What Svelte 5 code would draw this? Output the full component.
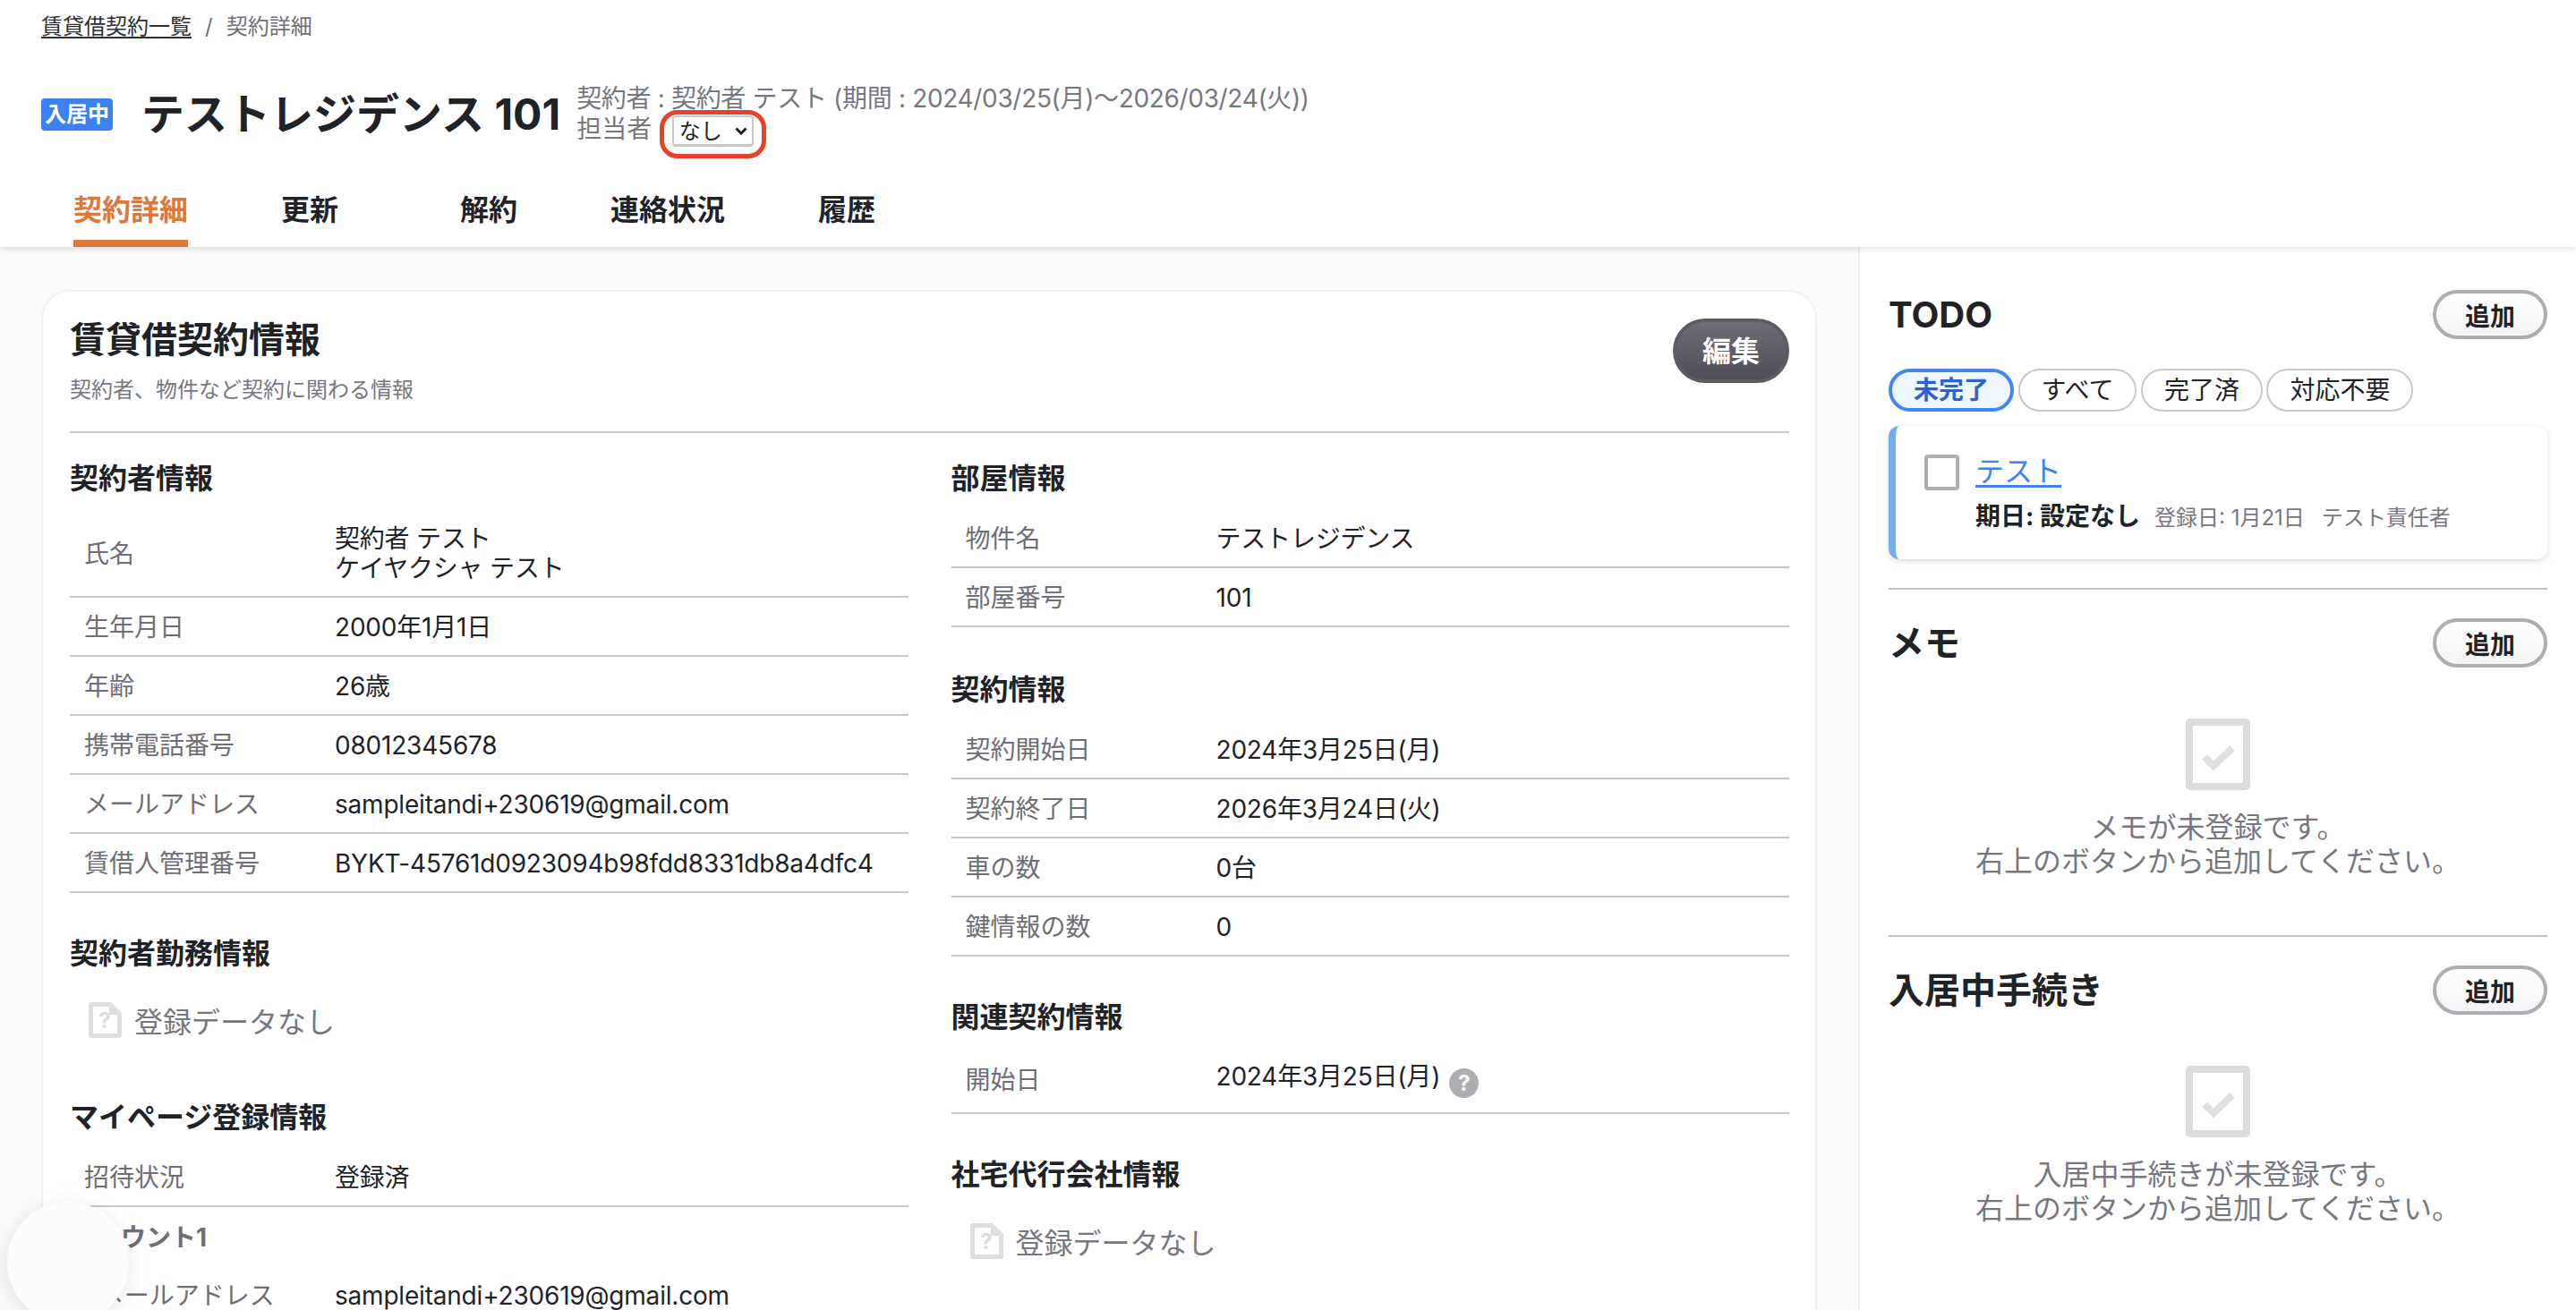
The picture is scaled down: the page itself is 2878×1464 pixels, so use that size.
<script>
  const tabs = ['契約詳細', '更新', '解約', '連絡状況', '履歴'];

  const tenantRows = [
    { label: '氏名', value: ['契約者 テスト', 'ケイヤクシャ テスト'] },
    { label: '生年月日', value: ['2000年1月1日'] },
    { label: '年齢', value: ['26歳'] },
    { label: '携帯電話番号', value: ['08012345678'] },
    { label: 'メールアドレス', value: ['sampleitandi+230619@gmail.com'] },
    { label: '賃借人管理番号', value: ['BYKT-45761d0923094b98fdd8331db8a4dfc4'] }
  ];
  const roomRows = [
    { label: '物件名', value: ['テストレジデンス'] },
    { label: '部屋番号', value: ['101'] }
  ];
  const contractRows = [
    { label: '契約開始日', value: ['2024年3月25日(月)'] },
    { label: '契約終了日', value: ['2026年3月24日(火)'] },
    { label: '車の数', value: ['0台'] },
    { label: '鍵情報の数', value: ['0'] }
  ];
  const filters = ['未完了', 'すべて', '完了済', '対応不要'];
</script>

{#snippet rows(list)}
  <div class="table">
    {#each list as row}
      <div class="row">
        <div class="label">{row.label}</div>
        <div class="value">
          {#each row.value as line}
            <div>{line}</div>
          {/each}
        </div>
      </div>
    {/each}
  </div>
{/snippet}

{#snippet noData()}
  <div class="no-data">
    <svg width="37" height="40" viewBox="0 0 37 40">
      <path d="M3 0H25L37 12V37a3 3 0 0 1-3 3H3a3 3 0 0 1-3-3V3a3 3 0 0 1 3-3Z" fill="#dedee0" />
      <path d="M5 5H23V14H32V35H5Z" fill="#fff" />
      <text x="18" y="29" text-anchor="middle" class="doc-mark">?</text>
    </svg>
    <span>登録データなし</span>
  </div>
{/snippet}

{#snippet emptyState(first)}
  <div class="empty">
    <svg width="72" height="80" viewBox="0 0 72 80">
      <rect x="4" y="4" width="64" height="72" rx="1" fill="#fff" stroke="#dcdcde" stroke-width="8" />
      <path d="M21 43L31 53L52 33" fill="none" stroke="#e0e0e2" stroke-width="8" />
    </svg>
    <p>{first}<br />右上のボタンから追加してください。</p>
  </div>
{/snippet}

<div class="page">
  <header class="header">
    <nav class="breadcrumb">
      <span class="crumb-link">賃貸借契約一覧</span>
      <span class="crumb-sep">/</span>
      <span>契約詳細</span>
    </nav>
    <div class="title-row">
      <span class="badge">入居中</span>
      <h1>テストレジデンス 101</h1>
      <div class="meta">
        <div class="meta-line">契約者 : 契約者 テスト (期間 : 2024/03/25(月)〜2026/03/24(火))</div>
        <div class="meta-owner">
          <span class="owner-label">担当者</span>
          <div class="owner-select">
            <span class="owner-text">なし</span>
            <svg width="14" height="10" viewBox="0 0 14 10">
              <path d="M1.5 2.5L7 8L12.5 2.5" fill="none" stroke="#1f2328" stroke-width="3" />
            </svg>
            <span class="ring"></span>
          </div>
        </div>
      </div>
    </div>
    <div class="tabs">
      {#each tabs as tab, i}
        <div class="tab">
          <span class:active={i === 0}>{tab}</span>
        </div>
      {/each}
    </div>
  </header>

  <main class="main">
    <section class="content">
      <div class="card">
        <div class="card-head">
          <div>
            <h2>賃貸借契約情報</h2>
            <p class="card-sub">契約者、物件など契約に関わる情報</p>
          </div>
          <button type="button" class="edit">編集</button>
        </div>
        <div class="columns">
          <div>
            <h3>契約者情報</h3>
            {@render rows(tenantRows)}
            <h3 class="next">契約者勤務情報</h3>
            {@render noData()}
            <h3 class="next">マイページ登録情報</h3>
            {@render rows([{ label: '招待状況', value: ['登録済'] }])}
            <div class="account">アカウント1</div>
            <div class="row plain">
              <div class="label">Eメールアドレス</div>
              <div class="value">sampleitandi+230619@gmail.com</div>
            </div>
          </div>
          <div>
            <h3>部屋情報</h3>
            {@render rows(roomRows)}
            <h3 class="next wide">契約情報</h3>
            {@render rows(contractRows)}
            <h3 class="next">関連契約情報</h3>
            <div class="table">
              <div class="row tall">
                <div class="label">開始日</div>
                <div class="value with-help">
                  <span>2024年3月25日(月)</span>
                  <span class="help">?</span>
                </div>
              </div>
            </div>
            <h3 class="next">社宅代行会社情報</h3>
            {@render noData()}
          </div>
        </div>
      </div>
    </section>

    <aside class="aside">
      <div class="panel">
        <div class="panel-head">
          <h2>TODO</h2>
          <button type="button" class="add">追加</button>
        </div>
        <div class="filters">
          {#each filters as filter, i}
            <span class="pill" class:on={i === 0}>{filter}</span>
          {/each}
        </div>
        <div class="todo">
          <span class="check"></span>
          <div>
            <div class="todo-title">テスト</div>
            <div class="todo-meta">
              <b>期日: 設定なし</b>
              <span class="small">登録日: 1月21日</span>
              <span class="small">テスト責任者</span>
            </div>
          </div>
        </div>
      </div>
      <div class="panel">
        <div class="panel-head">
          <h2>メモ</h2>
          <button type="button" class="add">追加</button>
        </div>
        {@render emptyState('メモが未登録です。')}
      </div>
      <div class="panel">
        <div class="panel-head">
          <h2>入居中手続き</h2>
          <button type="button" class="add">追加</button>
        </div>
        {@render emptyState('入居中手続きが未登録です。')}
      </div>
    </aside>
  </main>

  <div class="float"></div>
</div>

<style>
  :global(body) {
    margin: 0;
    font-family: Inter, "Noto Sans CJK JP", sans-serif;
    color: #1f2328;
  }

  .page {
    position: relative;
    height: 1464px;
    overflow: hidden;
    background: #fafafa;
  }

  .header {
    position: relative;
    z-index: 1;
    height: 276px;
    box-sizing: border-box;
    padding: 18px 46px 0;
    background: #fff;
    box-shadow: 0 2px 8px rgba(0, 0, 0, 0.12);
  }

  .breadcrumb {
    display: flex;
    height: 24px;
    align-items: center;
    font-size: 24px;
    line-height: 24px;
    color: #6e6e76;
  }

  .crumb-link {
    color: #2c2f33;
    text-decoration: underline;
    text-decoration-thickness: 2px;
    text-underline-offset: 3px;
  }

  .crumb-sep {
    margin: 0 15px;
  }

  .title-row {
    display: flex;
    align-items: center;
    height: 72px;
    margin-top: 50px;
  }

  .badge {
    width: 80px;
    height: 36px;
    border-radius: 4px;
    background: #3b82ee;
    color: #fff;
    font-size: 24px;
    font-weight: 700;
    line-height: 36px;
    text-align: center;
  }

  h1 {
    margin: 0 18px 0 32px;
    font-size: 48px;
    font-weight: 700;
    line-height: 60px;
    white-space: nowrap;
  }

  .meta {
    font-size: 28px;
    color: #77777f;
  }

  .meta-line {
    height: 30px;
    line-height: 34px;
    letter-spacing: -0.33px;
    white-space: nowrap;
  }

  .meta-owner {
    display: flex;
    align-items: center;
    gap: 23px;
    margin-top: 6px;
  }

  .owner-label {
    margin-top: -9px;
  }

  .owner-select {
    position: relative;
    display: flex;
    align-items: center;
    justify-content: center;
    gap: 14px;
    box-sizing: border-box;
    width: 91px;
    height: 35px;
    border: 2px solid #c8c8cc;
    border-bottom-width: 3px;
    border-radius: 4px;
    font-size: 24px;
    color: #1f2328;
  }

  .owner-text {
    margin-top: -3px;
  }

  .ring {
    position: absolute;
    top: -8px;
    left: -16px;
    right: -16px;
    bottom: -16px;
    border: 5px solid #ea4025;
    border-radius: 20px;
  }

  .tabs {
    display: flex;
    margin-top: 51px;
  }

  .tab {
    width: 200px;
    text-align: center;
    font-size: 32px;
    font-weight: 700;
    line-height: 40px;
  }

  .tab span {
    display: inline-block;
    height: 61px;
    box-sizing: border-box;
  }

  .tab span.active {
    color: #dd773c;
    border-bottom: 8px solid #dd773c;
  }

  .main {
    display: flex;
    height: 1188px;
  }

  .content {
    width: 2076px;
    flex: none;
    box-sizing: border-box;
    padding: 48px 46px 0 46px;
  }

  .card {
    box-sizing: border-box;
    min-height: 1400px;
    padding: 30px 29px 0 30px;
    background: #fff;
    border: 2px solid #f1f1f3;
    border-radius: 32px;
  }

  .card-head {
    display: flex;
    justify-content: space-between;
    align-items: flex-start;
    padding-bottom: 28px;
    border-bottom: 2px solid #c8c8cc;
  }

  h2 {
    margin: 0;
    font-size: 40px;
    font-weight: 700;
    line-height: 48px;
  }

  .card-sub {
    margin: 14px 0 0;
    font-size: 24px;
    line-height: 36px;
    color: #77777f;
  }

  .edit {
    width: 130px;
    height: 72px;
    padding: 0 0 4px;
    border: 4px solid #5d5b63;
    border-radius: 36px;
    background: linear-gradient(#6f6d75, #4f4d55);
    color: #fff;
    font: inherit;
    font-size: 32px;
    font-weight: 700;
  }

  .columns {
    display: grid;
    grid-template-columns: 1fr 1fr;
    gap: 48px;
    padding-top: 31px;
  }

  h3 {
    margin: 0 0 14px;
    font-size: 32px;
    font-weight: 700;
    line-height: 40px;
  }

  h3.next {
    margin-top: 48px;
  }

  h3.next.wide {
    margin-top: 50px;
  }

  .row {
    display: flex;
    align-items: center;
    padding: 17px 16px 14px;
    border-bottom: 2px solid #c8c8cc;
    font-size: 28px;
    line-height: 33px;
  }

  .row.plain {
    border-bottom: none;
  }

  .row.tall {
    padding: 16.5px 16px;
  }

  .label {
    width: 280px;
    flex: none;
    color: #6e6e76;
    white-space: nowrap;
  }

  .value {
    letter-spacing: -0.2px;
    white-space: nowrap;
  }

  .with-help {
    display: flex;
    align-items: center;
    gap: 10px;
  }

  .help {
    display: block;
    width: 33px;
    height: 33px;
    margin-top: 6px;
    border-radius: 50%;
    background: #aeaeb2;
    color: #fff;
    font-size: 24px;
    font-weight: 700;
    line-height: 33px;
    text-align: center;
  }

  .with-help span:first-child {
    margin-top: -7px;
  }

  .account {
    height: 66px;
    padding-left: 1px;
    font-size: 28px;
    font-weight: 700;
    line-height: 68px;
    color: #6e6e76;
  }

  .no-data {
    display: flex;
    align-items: center;
    gap: 14px;
    height: 60px;
    margin-top: 24px;
    padding: 0 0 11px 21px;
    font-size: 32px;
    color: #77777f;
  }

  .doc-mark {
    fill: #dcdcde;
    font-size: 24px;
    font-weight: 700;
  }

  .aside {
    flex: 1;
    box-sizing: border-box;
    padding: 48px 32px 0 32px;
    background: #fff;
    border-left: 2px solid #eeeeef;
  }

  .panel + .panel {
    margin-top: 32px;
    padding-top: 32px;
    border-top: 2px solid #c8c8cc;
  }

  .panel-head {
    display: flex;
    justify-content: space-between;
    align-items: center;
  }

  .add {
    width: 128px;
    height: 55px;
    padding: 0;
    border: 4px solid #aeaeb2;
    border-radius: 28px;
    background: linear-gradient(#fff, #f4f4f7);
    color: #1f2328;
    font: inherit;
    font-size: 28px;
    font-weight: 700;
  }

  .filters {
    display: flex;
    gap: 4.5px;
    margin-top: 33px;
  }

  .pill {
    box-sizing: border-box;
    height: 48px;
    padding: 0 24px;
    border: 2px solid #c8c8cc;
    border-radius: 24px;
    font-size: 28px;
    line-height: 44px;
  }

  .pill.on {
    padding: 0 24px;
    border: 4px solid #3f88f3;
    background: #eef6ff;
    color: #2c62cf;
    font-weight: 700;
    line-height: 40px;
  }

  .todo {
    display: flex;
    gap: 18px;
    box-sizing: border-box;
    height: 149px;
    margin-top: 16px;
    padding: 32px;
    border-left: 8px solid #72aeef;
    border-radius: 12px;
    box-shadow: 0 2px 6px rgba(0, 0, 0, 0.14);
  }

  .check {
    flex: none;
    box-sizing: border-box;
    width: 39px;
    height: 40px;
    border: 4px solid #aeaeb2;
    border-radius: 4px;
  }

  .todo-title {
    color: #3b82f6;
    font-size: 32px;
    line-height: 38px;
    text-decoration: underline;
    text-underline-offset: 4px;
  }

  .todo-meta {
    display: flex;
    align-items: baseline;
    margin-top: 12px;
    font-size: 28px;
    line-height: 38px;
    white-space: nowrap;
  }

  .todo-meta b {
    margin-right: 16px;
  }

  .small {
    margin-right: 19px;
    font-size: 24px;
    color: #77777f;
  }

  .empty {
    padding: 57px 0 31px;
    text-align: center;
  }

  .empty svg {
    display: block;
    margin: 0 auto;
  }

  .empty p {
    margin: 23px 0 0;
    font-size: 32px;
    line-height: 38px;
    color: #77777f;
  }

  .float {
    position: absolute;
    left: 8px;
    bottom: -15px;
    z-index: 2;
    width: 136px;
    height: 136px;
    border-radius: 50%;
    background: #fcfcfc;
    box-shadow: 0 4px 24px rgba(0, 0, 0, 0.1);
  }
</style>
